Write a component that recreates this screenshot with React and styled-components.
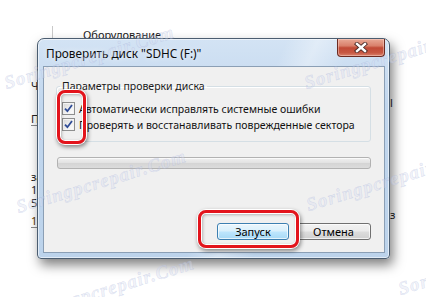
import React from 'react';
import styled, { createGlobalStyle } from 'styled-components';

const GlobalStyle = createGlobalStyle`
  html, body {
    margin: 0;
    padding: 0;
    background: #ffffff;
  }
  body {
    font-family: "Noto Sans", "Open Sans", sans-serif;
  }
`;

const Desk = styled.div`
  position: relative;
  width: 426px;
  height: 297px;
  overflow: hidden;
  box-sizing: border-box;
  padding: 38px 0 0 37px;
  background: #ffffff;
`;

/* window lying behind the dialog */
const BackWindow = styled.div`
  position: absolute;
  left: 27px;
  top: 26px;
  width: 399px;
  height: 236px;
  background: #ffffff;
  z-index: 0;
`;

const BackHeader = styled.div`
  display: flex;
  height: 14px;
  padding-left: 25px;
`;

const BackHeaderCell = styled.div`
  border-left: 1px solid #c9c9c9;
  padding-left: 30px;
  font-size: 11px;
  line-height: 14px;
  color: #1a1a1a;
  padding-top: 2px;
`;

const BackColumn = styled.div`
  display: flex;
  flex-direction: column;
  padding-left: 4px;
`;

const BackLine = styled.div`
  margin-top: ${p => p.$gap}px;
  font-size: 11px;
  line-height: 12px;
  color: ${p => p.$color || '#222'};
  border-bottom: ${p => (p.$rule ? '1px solid #8a8a8a' : 'none')};
  width: 60px;
  white-space: nowrap;
`;

const BackRight = styled.div`
  position: absolute;
  left: 363px;
  top: ${p => p.$top}px;
  font-size: 11px;
  line-height: 12px;
  color: #222;
`;

const Dialog = styled.div`
  position: relative;
  z-index: 1;
  width: 353px;
  height: 221px;
  box-sizing: border-box;
  border: 1px solid #4b5d70;
  border-radius: 7px 7px 4px 4px;
  background:
    linear-gradient(115deg, rgba(255, 255, 255, 0) 55%, rgba(255, 255, 255, 0.35) 62%, rgba(255, 255, 255, 0) 70%),
    linear-gradient(180deg, #d3e3f4 0%, #c2d7ee 30%, #bcd3eb 100%);
  box-shadow: inset 0 0 0 1px rgba(255, 255, 255, 0.55), 3px 6px 12px rgba(0, 0, 0, 0.5);
  display: flex;
  flex-direction: column;
  padding: 0 4px 5px 5px;
`;

const TitleBar = styled.div`
  height: 27px;
  display: flex;
  align-items: center;
  justify-content: space-between;
`;

const Title = styled.div`
  padding-left: 3px;
  font-size: 11.8px;
  color: #0b0b0b;
  text-shadow: 0 0 6px rgba(255, 255, 255, 0.9);
`;

const CloseButton = styled.div`
  align-self: flex-start;
  width: 48px;
  height: 18px;
  box-sizing: border-box;
  border: 1px solid #6b2b22;
  border-top: none;
  border-radius: 0 0 4px 4px;
  background: linear-gradient(180deg, #e9a996 0%, #d9806b 40%, #c14a36 52%, #c75843 80%, #d9826c 100%);
  box-shadow: inset 0 0 0 1px rgba(255, 220, 210, 0.45);
  display: flex;
  align-items: center;
  justify-content: center;
`;

const Client = styled.div`
  flex: 1;
  border: 1px solid #8b9fb5;
  background: #f0f0f0;
  display: flex;
  flex-direction: column;
  padding: 0 13px 12px 12px;
`;

const Group = styled.fieldset`
  margin: 11px 0 0 0;
  padding: 8px 0 10px 0;
  border: 1px solid #d5dfe5;
  border-radius: 3px;
  box-shadow: inset 1px 1px 0 #ffffff;
  display: flex;
  flex-direction: column;
  gap: 3px;
`;

const Legend = styled.legend`
  margin-left: 3px;
  padding: 0 2px;
  font-size: 10.5px;
  line-height: 16px;
  color: #1a1a1a;
`;

const CheckRow = styled.label`
  display: flex;
  align-items: center;
  gap: 4px;
  padding-left: 5px;
  height: 13px;
  font-size: 10.5px;
  color: #111;
  white-space: nowrap;
`;

const Box = styled.span`
  width: 13px;
  height: 13px;
  box-sizing: border-box;
  border: 1px solid #8e8f8f;
  background: linear-gradient(135deg, #d7d7d7 0%, #f2f2f2 60%, #ffffff 100%);
  box-shadow: inset 0 0 0 1px #f4f4f4;
  display: flex;
  align-items: center;
  justify-content: center;
  flex-shrink: 0;
`;

const Progress = styled.div`
  margin: 15px 0 0 1px;
  height: 12px;
  box-sizing: border-box;
  border: 1px solid #b2b2b2;
  border-radius: 3px;
  background: linear-gradient(180deg, #f0f0f0 0%, #e3e3e3 45%, #d5d5d5 55%, #dcdcdc 100%);
  box-shadow: inset 0 1px 0 #fafafa;
`;

const ButtonRow = styled.div`
  margin-top: auto;
  display: flex;
  justify-content: flex-end;
  gap: 7px;
`;

const Button = styled.div`
  width: ${p => p.$w}px;
  height: 17px;
  box-sizing: border-box;
  border: 1px solid ${p => (p.$default ? '#3c7fb1' : '#707070')};
  border-radius: 3px;
  background: ${p =>
    p.$default
      ? 'linear-gradient(180deg, #eaf6fd 0%, #d9f0fc 48%, #bee6fd 52%, #a7d9f5 100%)'
      : 'linear-gradient(180deg, #f2f2f2 0%, #ebebeb 48%, #dddddd 52%, #cfcfcf 100%)'};
  box-shadow: inset 0 0 0 1px rgba(255, 255, 255, 0.7);
  display: flex;
  align-items: center;
  justify-content: center;
  font-size: 11px;
  color: #000;
`;

const Highlight = styled.div`
  position: absolute;
  z-index: 2;
  left: ${p => p.$x}px;
  top: ${p => p.$y}px;
  width: ${p => p.$w}px;
  height: ${p => p.$h}px;
  box-sizing: border-box;
  border: 3px solid #e3141c;
  border-radius: 8px;
  box-shadow:
    0 0 0 1px #ffffff,
    1px 2px 4px 1px rgba(0, 0, 0, 0.45),
    inset 0 0 0 1px #ffffff,
    inset 1px 1px 3px 1px rgba(0, 0, 0, 0.25);
`;

const Watermark = styled.span`
  position: absolute;
  z-index: 3;
  left: ${p => p.$x}px;
  top: ${p => p.$y}px;
  transform: rotate(-17deg);
  transform-origin: left bottom;
  font-family: "Liberation Serif", serif;
  font-style: italic;
  font-weight: bold;
  font-size: 19px;
  letter-spacing: 1px;
  white-space: nowrap;
  color: rgba(215, 221, 240, 0.35);
  -webkit-text-stroke: 0.5px rgba(150, 165, 210, 0.3);
  pointer-events: none;
`;

const Check = () => (
  <svg width="9" height="9" viewBox="0 0 9 9">
    <path d="M1 4.6 L3.4 7.2 L8 1" fill="none" stroke="#2f4c96" strokeWidth="1.8" />
  </svg>
);

const CloseGlyph = () => (
  <svg width="14" height="11" viewBox="0 0 14 11">
    <path d="M3 2 L11 9 M11 2 L3 9" stroke="#4a2a26" strokeWidth="4.2" strokeLinecap="square" />
    <path d="M3 2 L11 9 M11 2 L3 9" stroke="#ffffff" strokeWidth="2.4" strokeLinecap="square" />
  </svg>
);

const marks = [
  { x: 8, y: 72 },
  { x: 308, y: 72 },
  { x: 20, y: 196 },
  { x: 310, y: 194 },
  { x: 28, y: 303 },
  { x: 402, y: 278 },
];

export default function App() {
  return (
    <Desk>
      <GlobalStyle />
      <BackWindow>
        <BackHeader>
          <BackHeaderCell>Оборудование</BackHeaderCell>
        </BackHeader>
        <BackColumn>
          <BackLine $gap={40}>Чтение</BackLine>
          <BackLine $gap={21} $rule>Параметры</BackLine>
          <BackLine $gap={45}>занято</BackLine>
          <BackLine $gap={1}>1/ ГБ</BackLine>
          <BackLine $gap={1}>5 ГБ</BackLine>
          <BackLine $gap={6} $color="#5a3a00" $rule>17 ГБ</BackLine>
        </BackColumn>
        <BackRight $top={71}>l</BackRight>
        <BackRight $top={183}>з</BackRight>
      </BackWindow>

      <Dialog>
        <TitleBar>
          <Title>Проверить диск "SDHC (F:)"</Title>
          <CloseButton>
            <CloseGlyph />
          </CloseButton>
        </TitleBar>
        <Client>
          <Group>
            <Legend>Параметры проверки диска</Legend>
            <CheckRow>
              <Box><Check /></Box>
              Автоматически исправлять системные ошибки
            </CheckRow>
            <CheckRow>
              <Box><Check /></Box>
              Проверять и восстанавливать поврежденные сектора
            </CheckRow>
          </Group>
          <Progress />
          <ButtonRow>
            <Button $w={72} $default>Запуск</Button>
            <Button $w={75}>Отмена</Button>
          </ButtonRow>
        </Client>
      </Dialog>

      <Highlight $x={57} $y={90} $w={29} $h={54} />
      <Highlight $x={198} $y={210} $w={101} $h={38} />

      {marks.map((m, i) => (
        <Watermark key={i} $x={m.x} $y={m.y}>Soringpcrepair.Com</Watermark>
      ))}
    </Desk>
  );
}
